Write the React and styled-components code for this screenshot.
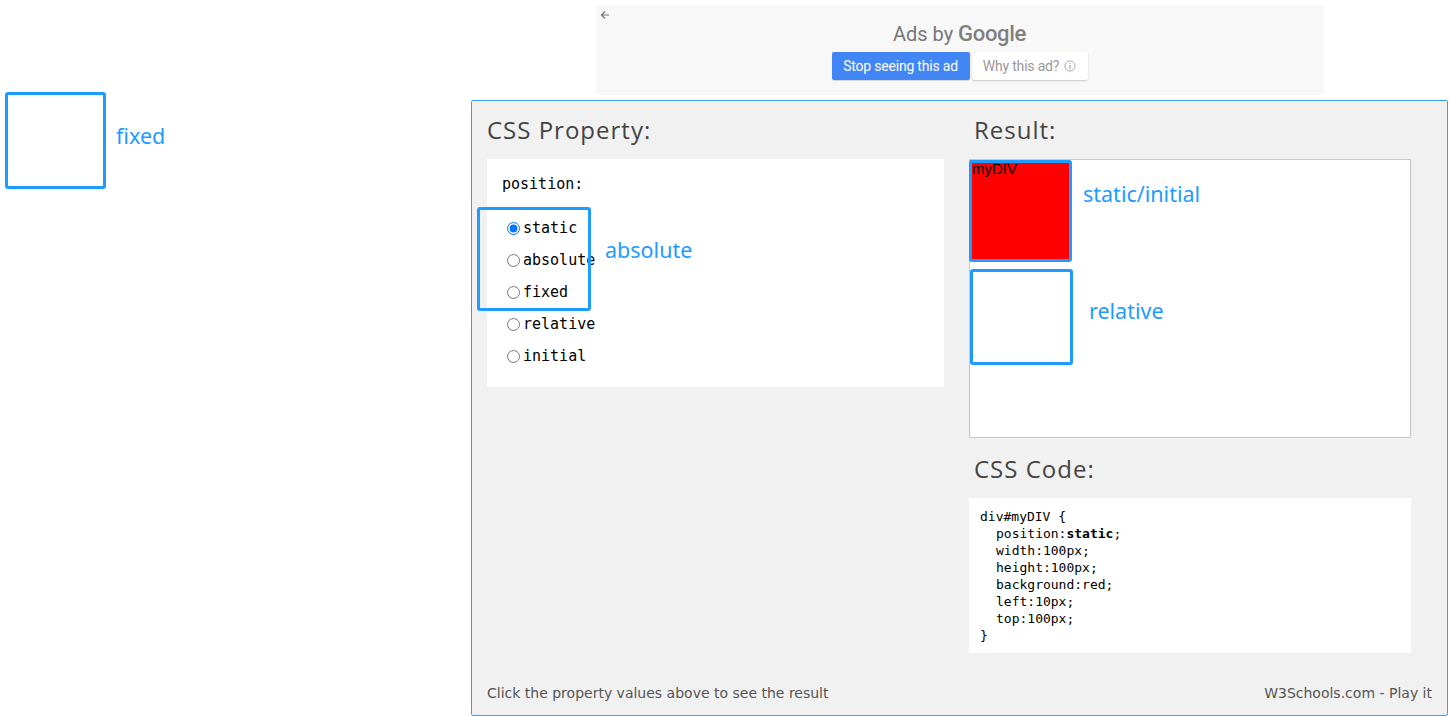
import React, { useState } from "react";
import styled, { createGlobalStyle } from "styled-components";

const blue = "#1e9bff";

const GlobalStyle = createGlobalStyle`
  html, body {
    margin: 0;
    padding: 0;
    background: #fff;
    font-family: "Liberation Sans", Arial, sans-serif;
  }
`;

const Page = styled.div`
  position: relative;
  width: 1449px;
  height: 716px;
  overflow: hidden;
`;

const Column = styled.div`
  margin-left: 471px;
  width: 977px;
  display: flex;
  flex-direction: column;
  align-items: center;
`;

const AdBox = styled.div`
  position: relative;
  margin-top: 5px;
  width: 728px;
  height: 90px;
  background: #f8f8f8;
  display: flex;
  flex-direction: column;
  align-items: center;
  box-sizing: border-box;
  padding-top: 17px;
`;

const BackArrow = styled.svg`
  position: absolute;
  left: 3px;
  top: 4px;
`;

const AdTitle = styled.div`
  font-family: Roboto, "Liberation Sans", sans-serif;
  font-size: 20px;
  line-height: 24px;
  color: #777;

  b {
    font-weight: 500;
    font-size: 22px;
    letter-spacing: -0.3px;
    color: #808080;
  }
`;

const AdButtons = styled.div`
  display: flex;
  gap: 2px;
  margin-top: 6px;
`;

const AdButton = styled.button`
  height: 28px;
  box-sizing: border-box;
  border: none;
  border-radius: 2px;
  padding: 0 6px;
  font-family: Roboto, "Liberation Sans", sans-serif;
  font-size: 14px;
  letter-spacing: -0.2px;
  display: flex;
  align-items: center;
  gap: 5px;
  background: ${p => (p.$primary ? "#4285f4" : "#fff")};
  color: ${p => (p.$primary ? "#fff" : "#999")};
  box-shadow: ${p => (p.$primary ? "0 1px 1px rgba(0,0,0,0.15)" : "0 1px 2px rgba(0,0,0,0.2)")};
  width: ${p => p.$w}px;
  justify-content: center;
`;

const Panel = styled.div`
  margin-top: 5px;
  width: 977px;
  height: 616px;
  box-sizing: border-box;
  border: 1px solid #3a9ff0;
  border-radius: 2px;
  background: #f1f1f1;
  padding: 0 35px 0 15px;
  display: flex;
  flex-direction: column;
`;

const Grid = styled.div`
  display: grid;
  grid-template-columns: 457px 442px;
  column-gap: 25px;
  align-items: start;
`;

const Col = styled.div`
  display: flex;
  flex-direction: column;
`;

const Heading = styled.h3`
  margin: ${p => p.$mt || 11}px 0 11px 0;
  padding-left: ${p => p.$pl || 0}px;
  font-family: "Open Sans", sans-serif;
  font-weight: 400;
  font-size: 24px;
  letter-spacing: 1px;
  line-height: 36px;
  color: #444;
`;

const PropertyBox = styled.div`
  background: #fff;
  height: 228px;
  box-sizing: border-box;
  padding: 15px 15px 16px;
  font-family: "DejaVu Sans Mono", "Liberation Mono", monospace;
  font-size: 15px;
  color: #000;
`;

const PropName = styled.div`
  line-height: 20px;
  margin-bottom: 18px;
`;

const RadioRow = styled.label`
  display: flex;
  align-items: center;
  height: 32px;

  input {
    margin: 0 3px 0 5px;
    width: 13px;
    height: 13px;
    accent-color: #0075ff;
  }
`;

const ResultBox = styled.div`
  background: #fff;
  border: 1px solid #c8c8c8;
  height: 279px;
  box-sizing: border-box;
`;

const MyDiv = styled.div`
  width: 100px;
  height: 100px;
  background: red;
  font-family: "Liberation Sans", Arial, sans-serif;
  font-size: 15px;
  line-height: 17px;
  color: #000;
  padding-left: 2px;
  box-sizing: border-box;
`;

const CodeBox = styled.div`
  background: #fff;
  padding: 10px 11px 9px;
  font-family: "DejaVu Sans Mono", "Liberation Mono", monospace;
  font-size: 13px;
  line-height: 17px;
  color: #000;
`;

const CodeLine = styled.div`
  white-space: pre;
  padding-left: ${p => (p.$indent ? 16 : 0)}px;
`;

const Footer = styled.div`
  margin-top: auto;
  margin-bottom: 12px;
  display: flex;
  justify-content: space-between;
  margin-right: -20px;
  font-family: "DejaVu Sans", Verdana, sans-serif;
  font-size: 14px;
  line-height: 20px;
  color: #555;
`;

const Mark = styled.div`
  position: absolute;
  left: ${p => p.$x}px;
  top: ${p => p.$y}px;
  width: ${p => p.$w}px;
  height: ${p => p.$h}px;
  box-sizing: border-box;
  border: 3px solid ${blue};
  border-radius: 3px;
  pointer-events: none;
`;

const Note = styled.div`
  position: absolute;
  left: ${p => p.$x}px;
  top: ${p => p.$y}px;
  font-family: "Noto Sans", "Open Sans", sans-serif;
  font-size: 21.5px;
  line-height: 28px;
  color: ${blue};
  white-space: nowrap;
`;

const values = ["static", "absolute", "fixed", "relative", "initial"];
const rules = ["width:100px;", "height:100px;", "background:red;", "left:10px;", "top:100px;"];

export default function App() {
  const [value, setValue] = useState("static");

  return (
    <Page>
      <GlobalStyle />
      <Column>
        <AdBox>
          <BackArrow width="12" height="12" viewBox="0 0 12 12">
            <path d="M10 6H2.5M6 2.5L2.5 6 6 9.5" fill="none" stroke="#777" strokeWidth="1.2" />
          </BackArrow>
          <AdTitle>
            Ads by <b>Google</b>
          </AdTitle>
          <AdButtons>
            <AdButton $primary $w={138}>Stop seeing this ad</AdButton>
            <AdButton $w={116}>
              Why this ad?
              <svg width="12" height="12" viewBox="0 0 12 12">
                <circle cx="6" cy="6" r="5" fill="none" stroke="#aaa" strokeWidth="1" />
                <path d="M6 5v4M6 3v1" stroke="#aaa" strokeWidth="1.2" />
              </svg>
            </AdButton>
          </AdButtons>
        </AdBox>

        <Panel>
          <Grid>
            <Col>
              <Heading>CSS Property:</Heading>
              <PropertyBox>
                <PropName>position:</PropName>
                {values.map(v => (
                  <RadioRow key={v}>
                    <input
                      type="radio"
                      name="pos"
                      checked={value === v}
                      onChange={() => setValue(v)}
                    />
                    {v}
                  </RadioRow>
                ))}
              </PropertyBox>
            </Col>
            <Col>
              <Heading $pl={5}>Result:</Heading>
              <ResultBox>
                <MyDiv>myDIV</MyDiv>
              </ResultBox>
              <Heading $pl={5} $mt={13}>CSS Code:</Heading>
              <CodeBox>
                <CodeLine>div#myDIV {"{"}</CodeLine>
                <CodeLine $indent>
                  position:<b>{value}</b>;
                </CodeLine>
                {rules.map(r => (
                  <CodeLine $indent key={r}>{r}</CodeLine>
                ))}
                <CodeLine>{"}"}</CodeLine>
              </CodeBox>
            </Col>
          </Grid>
          <Footer>
            <span>Click the property values above to see the result</span>
            <span>W3Schools.com - Play it</span>
          </Footer>
        </Panel>
      </Column>

      <Mark $x={5} $y={92} $w={101} $h={97} />
      <Note $x={116} $y={122}>fixed</Note>

      <Mark $x={477} $y={207} $w={114} $h={104} />
      <Note $x={605} $y={236}>absolute</Note>

      <Mark $x={969} $y={160} $w={103} $h={102} />
      <Note $x={1083} $y={180}>static/initial</Note>

      <Mark $x={970} $y={269} $w={103} $h={96} />
      <Note $x={1089} $y={297}>relative</Note>
    </Page>
  );
}
